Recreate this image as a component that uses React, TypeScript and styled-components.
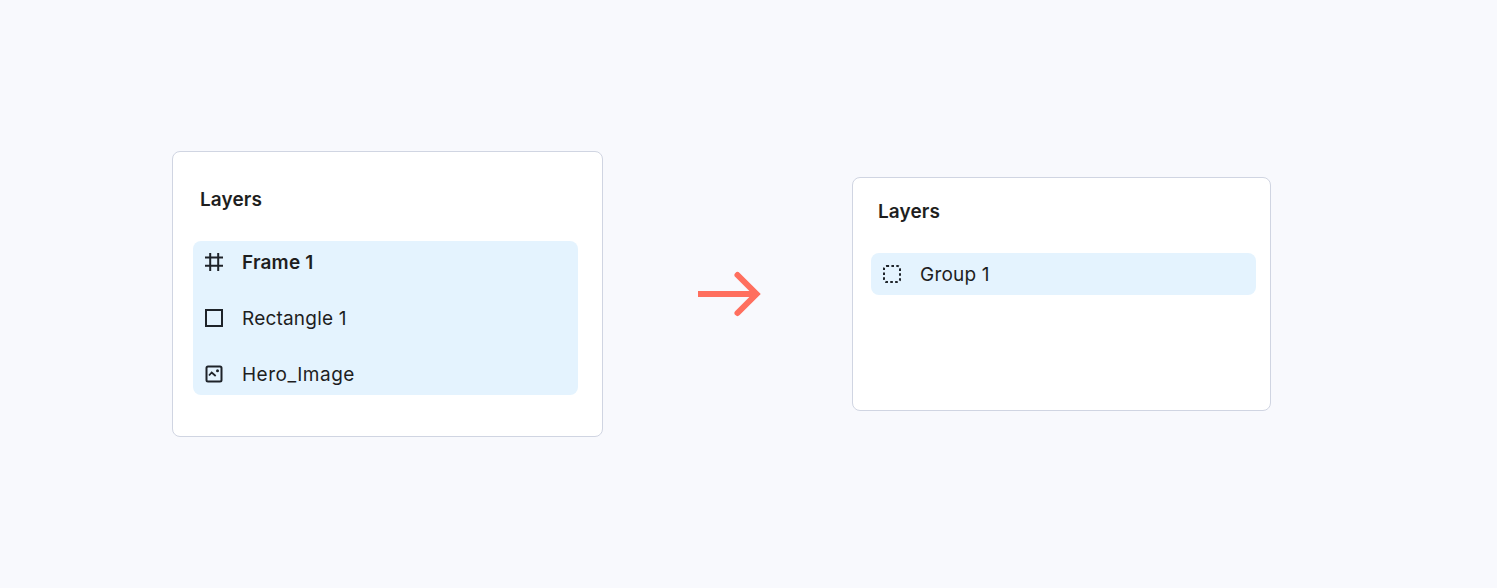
import { createGlobalStyle, styled } from 'styled-components'

const GlobalStyle = createGlobalStyle`
  html, body {
    margin: 0;
    padding: 0;
    background: #f8f9fd;
  }
`

const Page = styled.div`
  width: 1497px;
  height: 588px;
  box-sizing: border-box;
  padding-left: 172px;
  display: flex;
  align-items: center;
  font-family: Inter, 'Liberation Sans', sans-serif;
  color: #1e1e1e;
  overflow: hidden;
`

const Panel = styled.section<{ $width: number; $height: number; $pad: string }>`
  width: ${props => props.$width}px;
  height: ${props => props.$height}px;
  box-sizing: border-box;
  padding: ${props => props.$pad};
  background: #fff;
  border: 1px solid #d0d5e2;
  border-radius: 8px;
  flex-shrink: 0;
`

const Title = styled.h2<{ $indent: number }>`
  margin: 0 0 29px ${props => props.$indent}px;
  font-size: 19px;
  line-height: 24px;
  font-weight: 600;
  letter-spacing: 0.1px;
`

const LayerList = styled.ul`
  width: 385px;
  margin: 0;
  padding: 0;
  list-style: none;
  display: flex;
  flex-direction: column;
  gap: 14px;
  background: #e4f3fe;
  border-radius: 8px;
`

const LayerRow = styled.li<{ $bold?: boolean; $spacing?: number }>`
  height: 42px;
  padding-left: 11px;
  display: flex;
  align-items: center;
  gap: 18px;
  font-size: 19px;
  letter-spacing: ${props => props.$spacing ?? 0.2}px;
  font-weight: ${props => (props.$bold ? 600 : 400)};
`

const Icon = styled.svg`
  width: 20px;
  height: 20px;
  flex-shrink: 0;
  fill: none;
  stroke: #1e2329;
  stroke-width: 2;
`

const ArrowSlot = styled.div`
  width: 249px;
  padding-left: 94px;
  box-sizing: border-box;
  display: flex;
  flex-shrink: 0;
`

const FrameIcon = () => (
  <Icon viewBox="0 0 20 20">
    <path d="M6.2 1v18M14.2 1v18M1 5.5h18M1 13.7h18" />
  </Icon>
)

const RectIcon = () => (
  <Icon viewBox="0 0 20 20">
    <rect x="2" y="2" width="16" height="16" />
  </Icon>
)

const ImageIcon = () => (
  <Icon viewBox="0 0 20 20">
    <rect x="2.5" y="2.500" width="15" height="15" rx="1.5" />
    <path d="M5 11.500l2.700-3 4 3.500" strokeWidth="1.8" />
    <circle cx="13.500" cy="6.800" r="1.500" fill="#1e2329" stroke="none" />
  </Icon>
)

const GroupIcon = () => (
  <Icon viewBox="0 0 20 20">
    <rect x="2" y="2" width="16" height="16" rx="2.5" strokeDasharray="2.6 2.3" />
  </Icon>
)

const Arrow = () => (
  <svg width="65" height="48" viewBox="0 0 65 48" fill="none" stroke="#ff6f5e" strokeWidth="6">
    <path d="M1 24h59" />
    <path d="M40.500 5l19 19-19 19" strokeLinecap="round" />
  </svg>
)

export default function App() {
  return (
    <Page>
      <GlobalStyle />
      <Panel $width={431} $height={286} $pad="36px 0 0 20px">
        <Title $indent={7}>Layers</Title>
        <LayerList>
          <LayerRow $bold><FrameIcon />Frame 1</LayerRow>
          <LayerRow><RectIcon />Rectangle 1</LayerRow>
          <LayerRow $spacing={0.5}><ImageIcon />Hero_Image</LayerRow>
        </LayerList>
      </Panel>
      <ArrowSlot>
        <Arrow />
      </ArrowSlot>
      <Panel $width={419} $height={234} $pad="22px 0 0 18px">
        <Title $indent={7}>Layers</Title>
        <LayerList>
          <LayerRow><GroupIcon />Group 1</LayerRow>
        </LayerList>
      </Panel>
    </Page>
  )
}
